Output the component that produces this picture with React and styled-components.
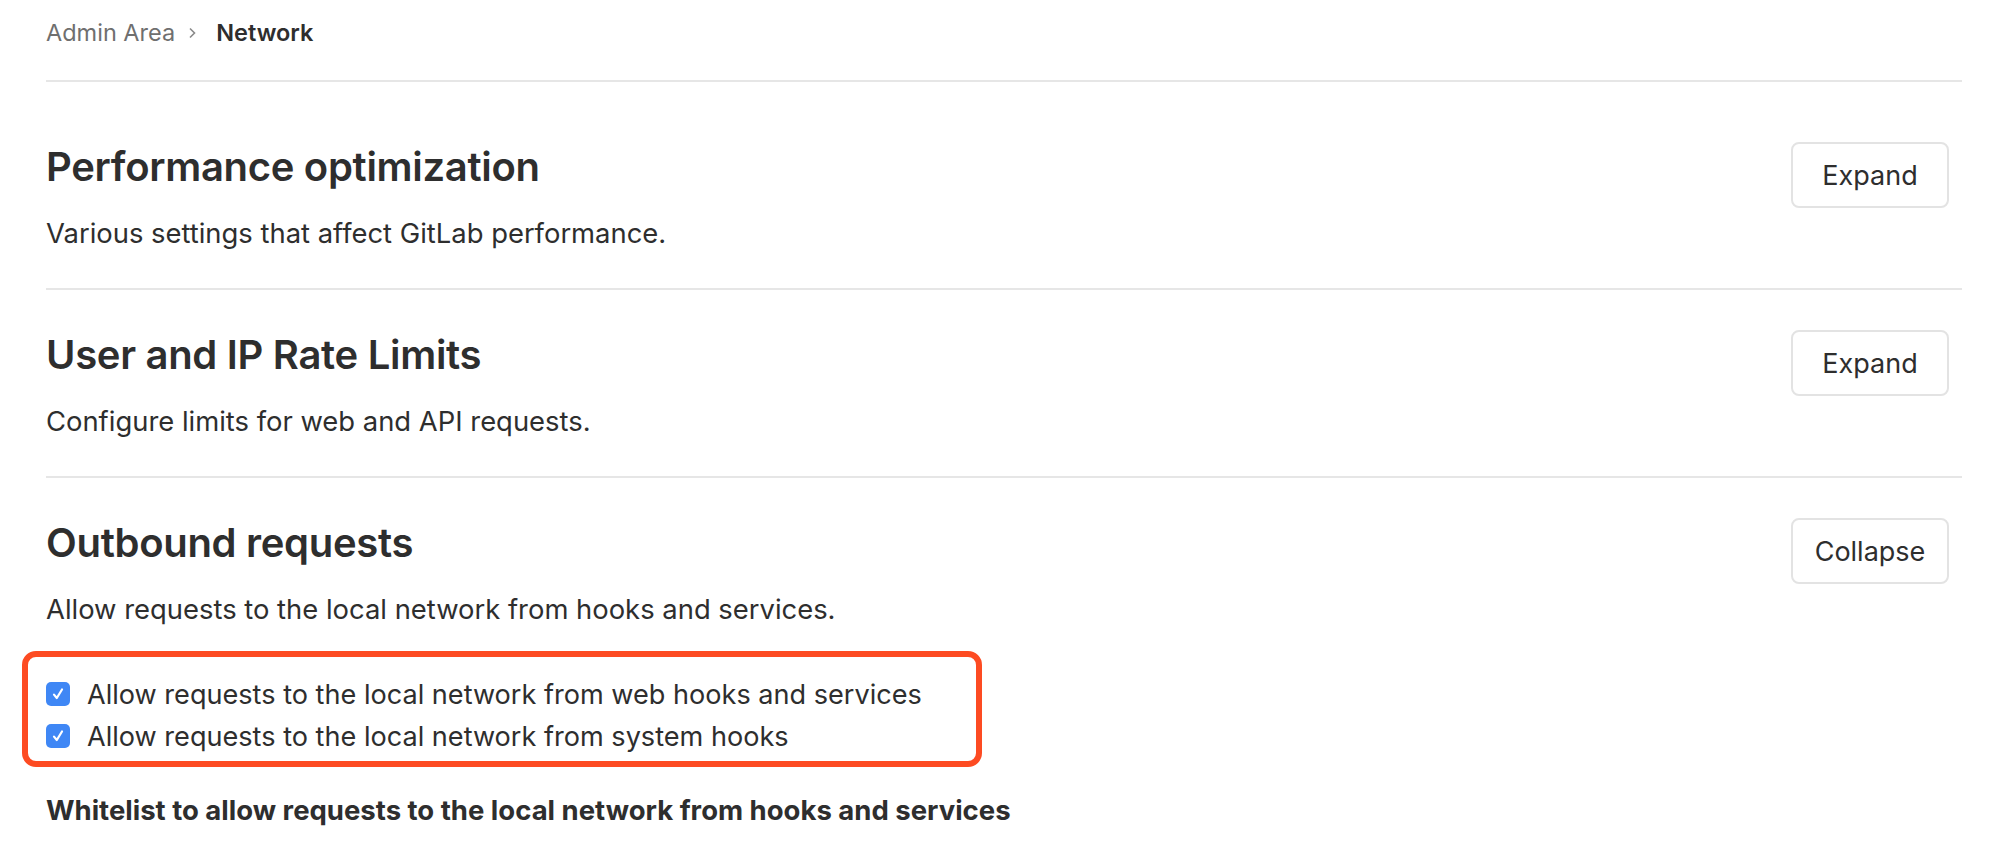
import styled, { createGlobalStyle } from "styled-components";

const GlobalStyle = createGlobalStyle`
  body {
    margin: 0;
    background: #ffffff;
    font-family: Inter, "Noto Sans", "Liberation Sans", sans-serif;
    color: #2e2e2e;
  }
`;

const Page = styled.div`
  padding: 0 32px 0 46px;
`;

const Breadcrumbs = styled.nav`
  display: flex;
  align-items: center;
  gap: 10px;
  height: 80px;
  padding-bottom: 14px;
  box-sizing: border-box;
  font-size: 23.5px;
  line-height: 34px;
`;

const Crumb = styled.span`
  color: ${(p) => (p.$current ? "#2e2e2e" : "#6f6f6f")};
  font-weight: ${(p) => (p.$current ? 600 : 400)};
`;

const Chevron = styled.svg`
  width: 14px;
  height: 14px;
  margin: 0 7px 0 0;
`;

const Section = styled.section`
  border-top: 2px solid #e6e6e6;
  padding: ${(p) => (p.$first ? "60px" : "40px")} 0 38px;
`;

const Header = styled.div`
  display: flex;
  justify-content: space-between;
  align-items: flex-start;
  padding-right: 13px;
`;

const Title = styled.h4`
  margin: 1px 0 0;
  font-size: 40px;
  line-height: 48px;
  font-weight: 600;
  letter-spacing: -0.3px;
`;

const Description = styled.p`
  margin: 25px 0 0;
  font-size: 27.4px;
  line-height: 34px;
`;

const ToggleButton = styled.button`
  width: 158px;
  height: 66px;
  border: 2px solid #e3e3e3;
  border-radius: 8px;
  background: #ffffff;
  color: #2e2e2e;
  font-family: inherit;
  font-size: 27px;
`;

const Highlight = styled.div`
  margin: 25px 0 0 -24px;
  width: 960px;
  box-sizing: border-box;
  border: 6px solid #fd4b22;
  border-radius: 14px;
  padding: 16px 0 4px 18px;
`;

const CheckRow = styled.label`
  display: flex;
  align-items: center;
  gap: 17px;
  height: 42px;
  font-size: 27.1px;
`;

const Box = styled.span`
  width: 24px;
  height: 24px;
  border-radius: 5px;
  background: #3f87f5;
  display: flex;
  align-items: center;
  justify-content: center;
  flex-shrink: 0;
`;

const FieldLabel = styled.div`
  margin-top: 26px;
  font-size: 27.5px;
  line-height: 34px;
  font-weight: 700;
`;

const Check = () => (
  <Box>
    <svg width="18" height="18" viewBox="0 0 18 18">
      <path d="M5 9.6 L7.8 13 L13 4.5" fill="none" stroke="#fff" strokeWidth="2.2" strokeLinecap="round" strokeLinejoin="round" />
    </svg>
  </Box>
);

const sections = [
  {
    title: "Performance optimization",
    text: "Various settings that affect GitLab performance.",
  },
  {
    title: "User and IP Rate Limits",
    text: "Configure limits for web and API requests.",
  },
];

const options = [
  "Allow requests to the local network from web hooks and services",
  "Allow requests to the local network from system hooks",
];

export default function App() {
  return (
    <>
      <GlobalStyle />
      <Page>
        <Breadcrumbs>
          <Crumb>Admin Area</Crumb>
          <Chevron viewBox="0 0 14 14">
            <path d="M5 2.5 L9.5 7 L5 11.5" fill="none" stroke="#8a8a8a" strokeWidth="1.6" />
          </Chevron>
          <Crumb $current>Network</Crumb>
        </Breadcrumbs>

        {sections.map((s, i) => (
          <Section key={s.title} $first={i === 0}>
            <Header>
              <div>
                <Title>{s.title}</Title>
                <Description>{s.text}</Description>
              </div>
              <ToggleButton>Expand</ToggleButton>
            </Header>
          </Section>
        ))}

        <Section>
          <Header>
            <div>
              <Title>Outbound requests</Title>
              <Description>Allow requests to the local network from hooks and services.</Description>
            </div>
            <ToggleButton>Collapse</ToggleButton>
          </Header>
          <Highlight>
            {options.map((o) => (
              <CheckRow key={o}>
                <Check />
                {o}
              </CheckRow>
            ))}
          </Highlight>
          <FieldLabel>Whitelist to allow requests to the local network from hooks and services</FieldLabel>
        </Section>
      </Page>
    </>
  );
}
